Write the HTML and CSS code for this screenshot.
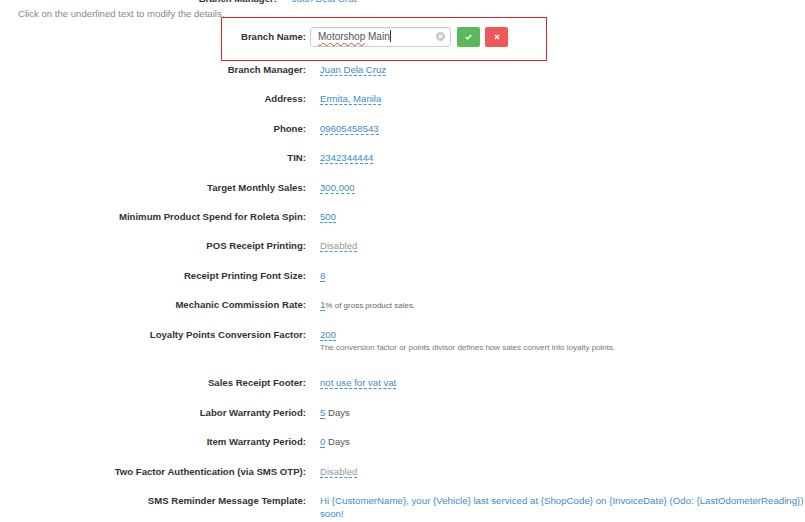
FILE: index.html
```html
<!DOCTYPE html>
<html lang="en">
<head>
  <meta charset="UTF-8">
  <title>Branch Details</title>
  <link rel="stylesheet" href="styles.css">
</head>
<body>
  <div class="page">
    <!-- header row left over from the scrolled list above -->
    <div class="ghost-row">
      <span class="ghost-label">Branch Manager:</span>
      <a class="ghost-value">Juan Dela Cruz</a>
    </div>
    <p class="hint">Click on the underlined text to modify the details.</p>

    <div class="details">
      <div class="row row-editing">
        <div class="edit-box">
          <label class="label edit-label">Branch Name:</label>
          <div class="edit-input">
            <span class="misspelled">Motorshop</span>&nbsp;Main<span class="caret"></span>
            <span class="clear-icon">
              <svg width="9" height="9" viewBox="0 0 10 10"><circle cx="5" cy="5" r="5" fill="#c8c8c8"/><path d="M3.2 3.2 L6.8 6.8 M6.8 3.2 L3.2 6.8" stroke="#fff" stroke-width="1.4"/></svg>
            </span>
          </div>
          <button class="btn btn-ok">
            <svg width="7" height="6" viewBox="0 0 7 6"><path d="M0.8 3.2 L2.7 4.8 L6.2 1" fill="none" stroke="#fff" stroke-width="1.4"/></svg>
          </button>
          <button class="btn btn-cancel">
            <svg width="6" height="6" viewBox="0 0 6 6"><path d="M1 1 L5 5 M5 1 L1 5" stroke="#fff" stroke-width="1.4"/></svg>
          </button>
        </div>
      </div>

      <div class="row">
        <div class="label">Branch Manager:</div>
        <div class="value"><a class="editable">Juan Dela Cruz</a></div>
      </div>
      <div class="row">
        <div class="label">Address:</div>
        <div class="value"><a class="editable">Ermita, Manila</a></div>
      </div>
      <div class="row">
        <div class="label">Phone:</div>
        <div class="value"><a class="editable">09605458543</a></div>
      </div>
      <div class="row">
        <div class="label">TIN:</div>
        <div class="value"><a class="editable">2342344444</a></div>
      </div>
      <div class="row">
        <div class="label">Target Monthly Sales:</div>
        <div class="value"><a class="editable">300,000</a></div>
      </div>
      <div class="row">
        <div class="label">Minimum Product Spend for Roleta Spin:</div>
        <div class="value"><a class="editable">500</a></div>
      </div>
      <div class="row">
        <div class="label">POS Receipt Printing:</div>
        <div class="value"><a class="editable muted">Disabled</a></div>
      </div>
      <div class="row">
        <div class="label">Receipt Printing Font Size:</div>
        <div class="value"><a class="editable">8</a></div>
      </div>
      <div class="row">
        <div class="label">Mechanic Commission Rate:</div>
        <div class="value"><a class="editable">1</a><small class="suffix">% of gross product sales.</small></div>
      </div>
      <div class="row">
        <div class="label">Loyalty Points Conversion Factor:</div>
        <div class="value">
          <a class="editable">200</a>
          <p class="help">The conversion factor or points divisor defines how sales convert into loyalty points.</p>
        </div>
      </div>
      <div class="row">
        <div class="label">Sales Receipt Footer:</div>
        <div class="value"><a class="editable">not use for vat vat</a></div>
      </div>
      <div class="row">
        <div class="label">Labor Warranty Period:</div>
        <div class="value"><a class="editable">5</a> Days</div>
      </div>
      <div class="row">
        <div class="label">Item Warranty Period:</div>
        <div class="value"><a class="editable">0</a> Days</div>
      </div>
      <div class="row">
        <div class="label">Two Factor Authentication (via SMS OTP):</div>
        <div class="value"><a class="editable muted">Disabled</a></div>
      </div>
      <div class="row">
        <div class="label">SMS Reminder Message Template:</div>
        <div class="value value-wide"><a class="template">Hi {CustomerName}, your {Vehicle} last serviced at {ShopCode} on {InvoiceDate} (Odo: {LastOdometerReading}) is due for a check-up. See you<br>soon!</a></div>
      </div>
    </div>
  </div>
</body>
</html>
```

FILE: styles.css
```css
body {
  margin: 0;
  font-family: "Liberation Sans", Arial, sans-serif;
  font-size: 9.6px;
  color: #333;
  background: #fff;
  overflow: hidden;
}

.page {
  width: 805px;
}

.ghost-row {
  display: flex;
  margin-top: -8px;
  line-height: 13px;
}

.ghost-label {
  width: 277px;
  text-align: right;
  font-weight: bold;
  margin-right: 15px;
}

.ghost-value {
  color: #428bca;
}

.hint {
  margin: 2px 0 0;
  padding-left: 18px;
  line-height: 13px;
  color: #888;
}

.details {
  margin-top: 5.5px;
}

.row {
  display: grid;
  grid-template-columns: 306px 1fr;
  column-gap: 14px;
  padding: 8.2px 0;
  line-height: 13px;
}

.label {
  text-align: right;
  font-weight: bold;
  color: #333;
}

.value {
  color: #555;
}

.value-wide {
  white-space: nowrap;
}

.editable {
  color: #428bca;
  text-decoration: none;
  border-bottom: 1px dashed #3a9ad9;
}

.editable.muted {
  color: #999;
}

.suffix {
  font-size: 8px;
  color: #666;
}

.help {
  margin: 0 0 5.6px;
  font-size: 8px;
  color: #777;
}

.template {
  font-size: 9.7px;
  color: #428bca;
}

/* inline edit popup */
.row-editing {
  display: block;
  padding: 0;
}

.edit-box {
  display: flex;
  align-items: flex-start;
  box-sizing: border-box;
  width: 326px;
  height: 44px;
  margin: -8.3px 0 -6.3px 221px;
  padding-top: 9px;
  border: 1px solid #e32222;
}

.edit-label {
  width: 84px;
  line-height: 20px;
}

.edit-input {
  position: relative;
  box-sizing: border-box;
  width: 141px;
  height: 20px;
  margin-left: 4px;
  padding-left: 7px;
  line-height: 18px;
  font-size: 10px;
  color: #555;
  border: 1px solid #ccc;
  border-radius: 3px;
  box-shadow: inset 0 1px 1px rgba(0, 0, 0, 0.06);
}

.misspelled {
  text-decoration: underline wavy #e04040;
  text-decoration-thickness: 1px;
  text-underline-offset: 2px;
}

.caret {
  display: inline-block;
  width: 1px;
  height: 12px;
  background: #333;
  vertical-align: -2px;
}

.clear-icon {
  position: absolute;
  right: 5px;
  top: 4px;
  line-height: 0;
}

.btn {
  display: flex;
  align-items: center;
  justify-content: center;
  width: 23px;
  height: 20px;
  padding: 0;
  border: none;
  border-radius: 2px;
  cursor: pointer;
}

.btn-ok {
  margin-left: 6px;
  background: #5cb85c;
}

.btn-cancel {
  margin-left: 5px;
  background: #ef5859;
}
```
